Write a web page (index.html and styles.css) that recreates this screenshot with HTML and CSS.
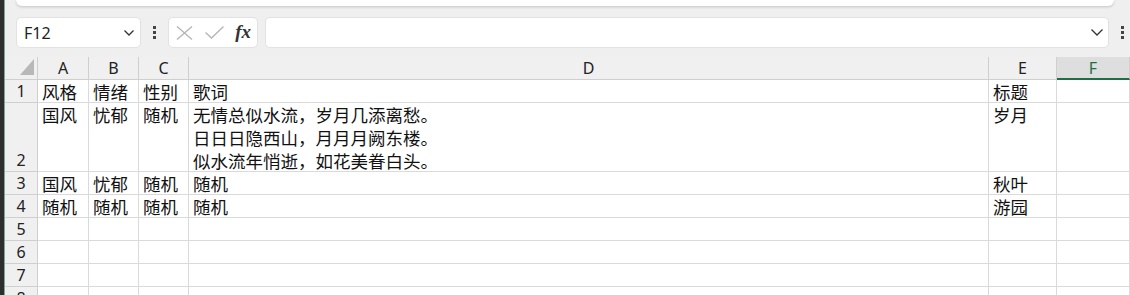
FILE: index.html
```html
<!DOCTYPE html>
<html>
<head>
	<meta charset="UTF-8">
	<title>工作表</title>
	<link rel="stylesheet" href="styles.css">
</head>
<body>
	<div class="edge"></div>
	<div class="main">
		<div class="top-card"></div>
		<div class="toolbar">
			<div class="box name-box">
				<span class="name">F12</span>
				<svg class="chevron" width="10" height="6" viewBox="0 0 10 6"><path d="M0.5 0.5L5 5L9.5 0.5" fill="none" stroke="#333" stroke-width="1.3"/></svg>
			</div>
			<div class="dots"><i></i><i></i><i></i></div>
			<div class="box fx-box">
				<svg width="17" height="14" viewBox="0 0 17 14"><path d="M1 0.5L16 13.5M16 0.5L1 13.5" stroke="#b4b4b4" stroke-width="1.3" fill="none"/></svg>
				<svg width="19" height="13" viewBox="0 0 19 13"><path d="M0.5 6.5L6.5 12L18.5 0.5" stroke="#b4b4b4" stroke-width="1.3" fill="none"/></svg>
				<span class="fx">fx</span>
			</div>
			<div class="box formula">
				<svg class="chevron" width="12" height="7" viewBox="0 0 12 7"><path d="M0.5 0.5L6 6L11.5 0.5" fill="none" stroke="#333" stroke-width="1.3"/></svg>
			</div>
			<div class="dots"><i></i><i></i><i></i></div>
		</div>
		<div class="sheet">
			<div class="corner"></div>
			<div class="col">A</div><div class="col">B</div><div class="col">C</div><div class="col">D</div><div class="col">E</div><div class="col selected">F</div>

			<div class="row-num">1</div>
			<div class="cell">风格</div><div class="cell">情绪</div><div class="cell">性别</div><div class="cell">歌词</div><div class="cell">标题</div><div class="cell"></div>

			<div class="row-num">2</div>
			<div class="cell">国风</div><div class="cell">忧郁</div><div class="cell">随机</div>
			<div class="cell">无情总似水流，岁月几添离愁。<br>日日日隐西山，月月月阙东楼。<br>似水流年悄逝，如花美眷白头。</div>
			<div class="cell">岁月</div><div class="cell"></div>

			<div class="row-num">3</div>
			<div class="cell">国风</div><div class="cell">忧郁</div><div class="cell">随机</div><div class="cell">随机</div><div class="cell">秋叶</div><div class="cell"></div>

			<div class="row-num">4</div>
			<div class="cell">随机</div><div class="cell">随机</div><div class="cell">随机</div><div class="cell">随机</div><div class="cell">游园</div><div class="cell"></div>

			<div class="row-num">5</div>
			<div class="cell"></div><div class="cell"></div><div class="cell"></div><div class="cell"></div><div class="cell"></div><div class="cell"></div>

			<div class="row-num">6</div>
			<div class="cell"></div><div class="cell"></div><div class="cell"></div><div class="cell"></div><div class="cell"></div><div class="cell"></div>

			<div class="row-num">7</div>
			<div class="cell"></div><div class="cell"></div><div class="cell"></div><div class="cell"></div><div class="cell"></div><div class="cell"></div>

			<div class="row-num">8</div>
			<div class="cell"></div><div class="cell"></div><div class="cell"></div><div class="cell"></div><div class="cell"></div><div class="cell"></div>
		</div>
	</div>
</body>
</html>
```

FILE: styles.css
```css
body {
	margin: 0;
	height: 295px;
	display: flex;
	overflow: hidden;
	background-color: #f0f0f0;
	font-family: "Noto Sans", "Noto Sans CJK SC", sans-serif;
}
.edge {
	flex: 0 0 4px;
	background-color: #2c2f2d;
	border-right: 1px solid #7fa58f;
}
.main {
	flex: 1;
	min-width: 0;
	display: flex;
	flex-direction: column;
	background-color: #efefef;
	overflow: hidden;
}
.main > div {
	flex-shrink: 0;
}
.top-card {
	height: 6px;
	margin: 0 16px 0 11px;
	background-color: white;
	border-radius: 0 0 8px 8px;
	box-shadow: 0 1px 3px rgba(0, 0, 0, 0.18);
}
.toolbar {
	display: flex;
	align-items: center;
	height: 31px;
	padding: 11px 0 0 11px;
}
.toolbar > * {
	flex-shrink: 0;
}
.box {
	height: 31px;
	box-sizing: border-box;
	background-color: white;
	border: 1px solid #e2e2e2;
	border-radius: 5px;
	display: flex;
	align-items: center;
}
.name-box {
	width: 125px;
	padding: 0 6px 0 7px;
	justify-content: space-between;
}
.name {
	font-size: 16px;
	color: #222;
}
.dots {
	width: 27px;
	display: flex;
	flex-direction: column;
	align-items: center;
	gap: 2px;
}
.dots i {
	width: 3px;
	height: 3px;
	background-color: #444;
}
.fx-box {
	width: 90px;
	padding: 0 6px 0 7px;
	justify-content: space-between;
}
.fx {
	font-family: "Liberation Serif", serif;
	font-style: italic;
	font-weight: bold;
	font-size: 19px;
	color: #333;
	padding-bottom: 2px;
}
.formula {
	width: 844px;
	margin-left: 7px;
	justify-content: flex-end;
	padding-right: 5px;
}
.sheet {
	margin-top: 9px;
	display: grid;
	grid-template-columns: 33px 51px 50px 50px 800px 68px 1fr;
	grid-template-rows: 23px 23px 69px 23px 23px 23px 23px 23px;
	background-color: white;
	font-family: "Noto Sans CJK SC", sans-serif;
}
.corner, .col, .row-num {
	background-color: #f0f0f0;
	border-right: 1px solid #cfcfcf;
	border-bottom: 1px solid #cfcfcf;
	box-sizing: border-box;
	color: #222;
	font-family: "Noto Sans", sans-serif;
	font-size: 16px;
}
.corner {
	position: relative;
}
.corner::after {
	content: "";
	position: absolute;
	right: 3px;
	bottom: 4px;
	width: 14px;
	height: 16px;
	background-color: #b8b8b8;
	clip-path: polygon(100% 0, 100% 100%, 0 100%);
}
.col {
	display: flex;
	align-items: center;
	justify-content: center;
}
.col.selected {
	background-color: #dedede;
	border-bottom: 2px solid #1f6e43;
	color: #1f6e43;
}
.row-num {
	display: flex;
	align-items: flex-end;
	justify-content: center;
	line-height: 22px;
}
.cell {
	border-right: 1px solid #dadada;
	border-bottom: 1px solid #dadada;
	box-sizing: border-box;
	padding-left: 4px;
	font-size: 17.5px;
	line-height: 23px;
	color: #111;
	white-space: nowrap;
	overflow: hidden;
}
```
